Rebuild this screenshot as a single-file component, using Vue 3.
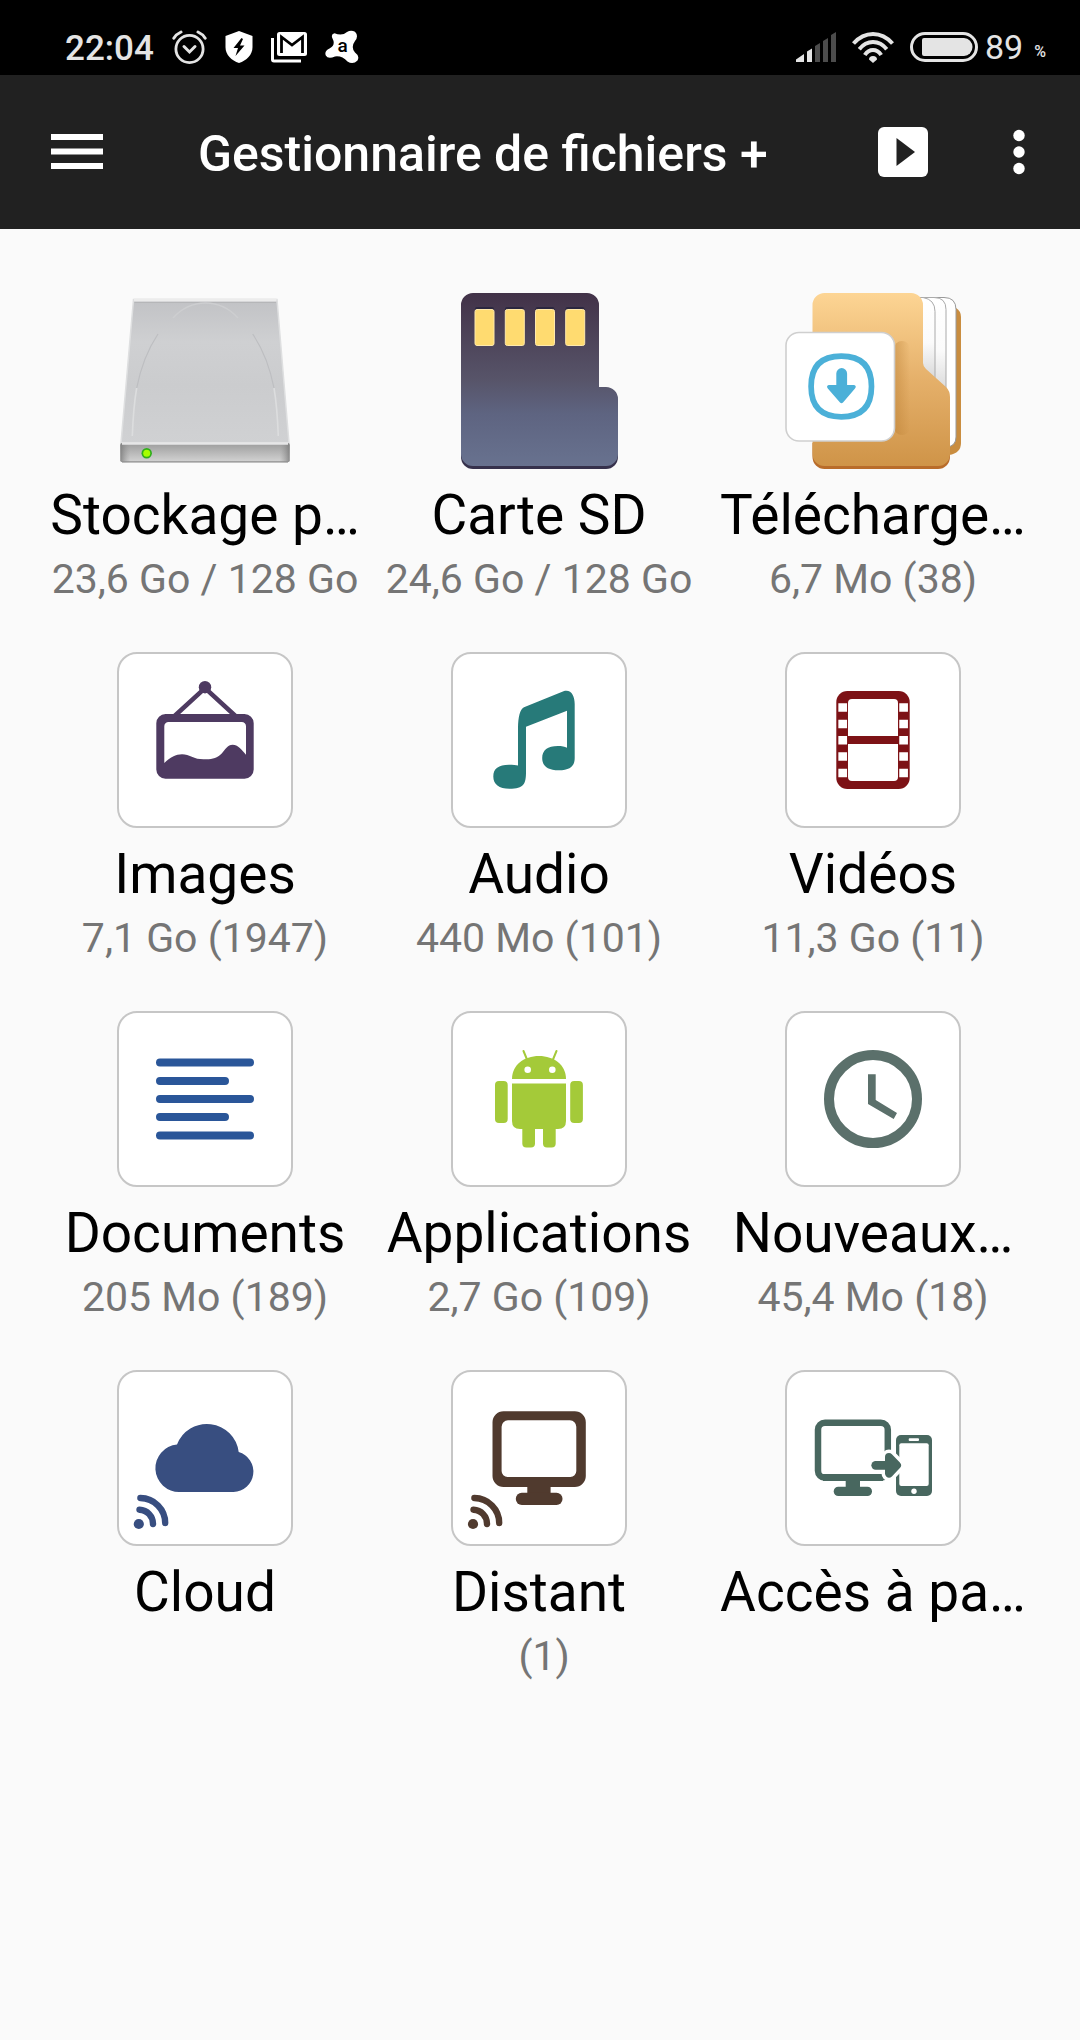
<template>
  <div class="screen">
    <div class="status-bar">
      <div class="status-left">
        <span class="clock">22:04</span>
        <svg class="status-icon" width="35" height="34" viewBox="0 0 35 34" fill="none" stroke="#e4e4e4" aria-hidden="true">
          <circle cx="17.5" cy="19" r="13.6" stroke-width="2.8" />
          <path d="M12 16.5l5.5 5.5 5.5-5.5" stroke-width="3" stroke-linecap="round" />
          <path d="M1.8 8.2Q4.5 4 9 2M33.2 8.2Q30.5 4 26 2" stroke-width="3" stroke-linecap="round" />
        </svg>
        <svg class="status-icon" width="28" height="34" viewBox="0 0 28 34" aria-hidden="true">
          <path fill="#fff" d="M14 1l13.5 5v11c0 8-6 13.5-13.5 16C6.500 30.500.5 25 .5 17V6z" />
          <path fill="#000" d="M16.5 8L8.500 18h4.500l-2.500 8L19.500 15.500H15l3-6.500z" />
        </svg>
        <svg class="status-icon" width="36" height="34" viewBox="0 0 36 34" aria-hidden="true">
          <path fill="none" stroke="#fff" stroke-width="3" d="M1.5 8v21.500q0 1.500 1.500 1.500h27" />
          <rect x="6" y="2" width="30" height="24" rx="2.5" fill="#fff" />
          <path fill="none" stroke="#000" stroke-width="2.8" d="M10.5 23V7l10.500 8 10.500-8v16" />
        </svg>
        <svg class="status-icon" width="34" height="34" viewBox="0 0 34 34" aria-hidden="true">
          <path
            fill="#fff"
            d="M7.500 8.500Q5.500 4 9.500 3.200 17 6.500 22 2 26-.5 30 1.800 34 6 30 11 25.500 17 30 22.500 35 26 32.500 30.500 28 35 22.500 31.500 17 25.500 10 26.500 3 29.500.8 25.500-1 21 4.500 18.500 11 15 7.500 8.500z"
          />
          <text x="17.500" y="22" text-anchor="middle" class="badge-letter">a</text>
        </svg>
      </div>
      <div class="status-right">
        <svg class="status-icon" width="40" height="30" viewBox="0 0 40 30" aria-hidden="true">
          <path fill="#e4e4e4" d="M0 30v-2.500L8 22v8zM11 30V19.500l5-3V30z" />
          <path fill="#4c4c4c" d="M19 30V14l5-3v19zM27 30V9l5-3v24zM35 30V3l5-3v30z" />
        </svg>
        <svg class="status-icon wifi" width="42" height="31" viewBox="0 0 42 31" fill="none" stroke="#e4e4e4" stroke-width="4" aria-hidden="true">
          <path d="M1.5 11.500Q10 2 21 2t19.500 9.500M7.300 17.200Q13 10 21 10t13.700 7.200M12.800 23Q16.200 18 21 18t8.200 5" />
          <path fill="#e4e4e4" stroke="none" d="M17 27.500q0-3.500 4-3.500t4 3.500L21 31z" />
        </svg>
        <svg class="status-icon" width="68" height="30" viewBox="0 0 68 30" aria-hidden="true">
          <rect x="1.5" y="1.5" width="65" height="27" rx="13.5" fill="none" stroke="#e4e4e4" stroke-width="3" />
          <path fill="#e4e4e4" d="M14 6h40a8.500 9 0 0 1 0 18H14q-2 0-2-2V8q0-2 2-2z" />
        </svg>
        <span class="battery-level">89</span>
        <span class="battery-unit">%</span>
      </div>
    </div>

    <header class="app-bar">
      <button class="bar-button" type="button" aria-label="Menu">
        <svg width="52" height="36" viewBox="0 0 52 36" fill="#fff">
          <path d="M0 0h52v6H0zM0 14.500h52v6H0zM0 29h52v6H0z" />
        </svg>
      </button>
      <h1 class="app-title">Gestionnaire de fichiers +</h1>
      <button class="bar-button" type="button" aria-label="Lecture">
        <svg width="50" height="50" viewBox="0 0 50 50">
          <rect width="50" height="50" rx="6" fill="#fff" />
          <path d="M18.500 11v28L37 25z" fill="#212121" />
        </svg>
      </button>
      <button class="bar-button more" type="button" aria-label="Plus d'options">
        <svg width="12" height="46" viewBox="0 0 12 46" fill="#fff">
          <circle cx="6" cy="6.5" r="5.7" />
          <circle cx="6" cy="23" r="5.7" />
          <circle cx="6" cy="39.5" r="5.7" />
        </svg>
      </button>
    </header>

    <main class="tiles">
      <button v-for="item in items" :key="item.id" type="button" class="tile">
        <svg
          class="tile-icon"
          :class="{ card: item.card }"
          :viewBox="item.card ? '2 2 172 172' : '0 0 176 176'"
          aria-hidden="true"
        >
          <g v-if="item.id === 'storage'">
            <defs>
              <linearGradient id="driveTop" x1="0" y1="0" x2="0" y2="1">
                <stop offset="0" stop-color="#c1c2c5" />
                <stop offset=".3" stop-color="#cfd0d2" />
                <stop offset=".6" stop-color="#cbccce" />
                <stop offset="1" stop-color="#d0d1d3" />
              </linearGradient>
              <linearGradient id="driveFront" x1="0" y1="0" x2="0" y2="1">
                <stop offset="0" stop-color="#9c9c9c" />
                <stop offset="1" stop-color="#d4d4d4" />
              </linearGradient>
              <linearGradient id="driveEdge">
                <stop offset="0" stop-color="#777" stop-opacity=".8" />
                <stop offset=".06" stop-color="#999" stop-opacity="0" />
                <stop offset=".94" stop-color="#999" stop-opacity="0" />
                <stop offset="1" stop-color="#777" stop-opacity=".8" />
              </linearGradient>
            </defs>
            <path fill="url(#driveTop)" stroke="#dedfe0" stroke-width="1.5" d="M16.5 6.500h143.500L172 150H4z" />
            <path fill="none" stroke="#ececec" stroke-width="3" d="M17 7h142.500" />
            <path fill="none" stroke="#b5b6b8" d="M17.5 9.500h141.500" />
            <path fill="none" stroke="#dcddde" stroke-width="1.6" d="M15.300 143C16 125 17 110 19.700 95M161.300 143C160.600 125 159.600 110 157 95" />
            <path fill="none" stroke="#cdced0" stroke-width="1.4" d="M56 25C66 14 77 10 88.500 10s22.500 4 32.500 15" />
            <path fill="none" stroke="#bdbec1" stroke-width="1.2" d="M19.700 95C24 73 31 56 41 41M157 95C152.700 73 145.700 56 135.700 41" />
            <rect x="3.3" y="150" width="169.4" height="19.3" rx="2" fill="url(#driveFront)" />
            <rect x="3.3" y="150" width="169.4" height="19.3" rx="2" fill="url(#driveEdge)" />
            <path fill="none" stroke="#e6e6e7" stroke-width="2.6" d="M5 150.500h166" />
            <path fill="none" stroke="#8f8f8f" stroke-width="1.2" d="M5 168.800h166" />
            <circle cx="29.7" cy="160.3" r="5.2" fill="#2fae1c" />
            <circle cx="29.7" cy="160.3" r="3.5" fill="#a6ff00" />
          </g>

          <g v-else-if="item.id === 'sd'">
            <defs>
              <linearGradient id="sdBody" x1="0" y1="0" x2="0" y2="1">
                <stop offset="0" stop-color="#423248" />
                <stop offset=".5" stop-color="#575469" />
                <stop offset=".7" stop-color="#5e6481" />
                <stop offset="1" stop-color="#68728f" />
              </linearGradient>
            </defs>
            <path fill="#36314c" d="M10 150h157v14a12 12 0 0 1-12 12H22a12 12 0 0 1-12-12z" />
            <path fill="url(#sdBody)" d="M22 0h114a12 12 0 0 1 12 12v82h7a12 12 0 0 1 12 12v55a12 12 0 0 1-12 12H22a12 12 0 0 1-12-12V12A12 12 0 0 1 22 0z" />
            <path fill="#2b2740" d="M24 18v-2q0-2 2-2h15q2 0 2 2v2zM54 18v-2q0-2 2-2h15q2 0 2 2v2zM84.500 18v-2q0-2 2-2h15q2 0 2 2v2zM114.500 18v-2q0-2 2-2h15q2 0 2 2v2z" />
            <g fill="#ffdb70" stroke="#ffe9ab" stroke-width="1">
              <rect x="24" y="16.5" width="19" height="36" rx="2" />
              <rect x="54.3" y="16.5" width="19" height="36" rx="2" />
              <rect x="84.5" y="16.5" width="19" height="36" rx="2" />
              <rect x="114.7" y="16.5" width="19" height="36" rx="2" />
            </g>
          </g>

          <g v-else-if="item.id === 'downloads'">
            <defs>
              <linearGradient id="folder" x1="0" y1="0" x2="0" y2="1">
                <stop offset="0" stop-color="#fdd594" />
                <stop offset=".5" stop-color="#e5b06a" />
                <stop offset="1" stop-color="#cf9448" />
              </linearGradient>
              <linearGradient id="paper" x1="0" y1="0" x2="0" y2="1">
                <stop offset="0" stop-color="#fff" />
                <stop offset=".5" stop-color="#fbfbfb" />
                <stop offset="1" stop-color="#cfcfcf" />
              </linearGradient>
              <linearGradient id="cardShade">
                <stop offset="0" stop-color="#b87c30" stop-opacity=".45" />
                <stop offset="1" stop-color="#b87c30" stop-opacity="0" />
              </linearGradient>
            </defs>
            <path fill="#c98d40" d="M130 15h41q5 3 5 9v126q0 10-12 12h-34z" />
            <path fill="#fff" stroke="#999" d="M130 4.500h29q12 0 12 12V144q0 9-9 10h-32z" />
            <path fill="url(#paper)" stroke="#aaa" d="M130 4.500h19q12 0 12 12V110h-31z" />
            <path fill="url(#paper)" stroke="#aaa" d="M130 4.500h8q12 2 12 14V95h-20z" />
            <path fill="#b96c2a" d="M27.500 150h137.500v14a12 12 0 0 1-12 12H39.500a12 12 0 0 1-12-12z" />
            <path fill="url(#folder)" d="M39.500 0h86.500a12 12 0 0 1 12 12v58q0 3 3 6l20 18q4 4 4 10v57a12 12 0 0 1-12 12H39.500a12 12 0 0 1-12-12V12A12 12 0 0 1 39.500 0z" />
            <rect x="109" y="48" width="16" height="94" rx="8" fill="url(#cardShade)" />
            <rect x="1" y="39.5" width="108.5" height="108.5" rx="13" fill="#fff" stroke="#cfcfcf" stroke-width="1.6" />
            <path fill="none" stroke="#4bb0d8" stroke-width="5.7" d="M56.300 63.200c20 0 30.200 10 30.200 30.300s-10.200 30.300-30.200 30.300-30.200-10-30.200-30.300 10.200-30.300 30.200-30.300z" />
            <path fill="#4bb0d8" d="M51.300 80.500a5.400 5.400 0 0 1 10.800 0V92H69q3 1 1 3.500L58 109.500q-1.500 1.500-3 0L42.800 95.500q-2-2.500 1-3.500h7.500z" />
          </g>

          <g v-else-if="item.id === 'images'" fill="#4e3a61">
            <circle cx="88" cy="35.2" r="6.2" />
            <path fill="none" stroke="#4e3a61" stroke-width="4.5" d="M57 64.500L88 36l31 28.500" />
            <path fill-rule="evenodd" d="M48.500 62h79a9.200 9.200 0 0 1 9.200 9.200v46.300a9.200 9.200 0 0 1-9.200 9.200h-79a9.200 9.200 0 0 1-9.200-9.200V71.200a9.200 9.200 0 0 1 9.200-9.200zM51.500 70a4.200 4.200 0 0 0-4.200 4.200V111C53 105.500 59 102.300 65 102.300c8 0 10.500 4.400 18 4.700 11 .6 16 .3 21.700-5.500 3.500-4 5.800-8.800 11-8.800 5 0 8.800 4.800 13.300 10V74.200a4.200 4.200 0 0 0-4.200-4.200z" />
          </g>

          <path
            v-else-if="item.id === 'audio'"
            fill="#277a79"
            d="M73 55.300L112.500 39.300C120 36.800 123.700 44 123.700 52v54c0 8-4.500 12.300-16 12.300-11 0-16.500-4.300-16.500-12.200S96.500 94 107 94c4 0 6.500.5 9 1.700v-37L75 74.700v45c0 12-2 17-16.500 17-10.500 0-16.200-4.300-16.200-12.200s5.200-11.800 15.700-11.800c4 0 7 .2 9 .8V76c0-11 2-18.500 6-20.700z"
          />

          <g v-else-if="item.id === 'videos'">
            <rect x="51.3" y="39" width="73.4" height="98" rx="11" fill="#7d1216" />
            <path fill="#fff" d="M67 47h42q4 0 4 4v33H63V51q0-4 4-4zM63 92h50v33q0 4-4 4H67q-4 0-4-4z" />
            <path
              stroke="#fff"
              stroke-width="8.7"
              stroke-dasharray="8.5 7.85"
              d="M57.700 51.300v74M118.600 51.300v74"
            />
          </g>

          <path
            v-else-if="item.id === 'documents'"
            stroke="#2a5699"
            stroke-width="8"
            stroke-linecap="round"
            d="M43 51.500h90M43 70h65M43 88h90M43 106h65M43 124.500h90"
          />

          <g v-else-if="item.id === 'apps'" fill="#a4ca39">
            <path d="M61 68c0-14 12-23 27-23s27 9 27 23z" />
            <path fill="none" stroke="#a4ca39" stroke-width="2" stroke-linecap="round" d="M72.500 40l3.500 8.500M105.500 40l-3.500 8.500" />
            <circle cx="76.7" cy="58.7" r="3.3" fill="#fff" />
            <circle cx="101.3" cy="58.7" r="3.3" fill="#fff" />
            <path d="M61 72.500h54V110q0 8-8 8h-2.300v14.500q0 4-4 4H96q-4 0-4-4V118h-8v14.500q0 4-4 4h-4.700q-4 0-4-4V118H69q-8 0-8-8z" />
            <rect x="44" y="70" width="12.7" height="42" rx="4" />
            <rect x="119.2" y="70" width="12.7" height="42" rx="4" />
          </g>

          <g v-else-if="item.id === 'recent'" fill="#5b706b">
            <circle cx="88" cy="88" r="44" fill="none" stroke="#5b706b" stroke-width="10" />
            <path d="M83 63.300h7.700V89L112 102l-3.300 6L83 93z" />
          </g>

          <g v-else-if="item.id === 'cloud'" fill="#384e80">
            <path d="M62.700 121.900a23.700 23.700 0 0 1-2.700-47.300A32 32 0 0 1 121.700 82.100a20.300 20.300 0 0 1-5.200 39.800z" />
            <circle cx="21.8" cy="154" r="5.1" />
            <path fill="none" stroke="#384e80" stroke-width="6.4" stroke-linecap="round" d="M22.500 139.700A14 14 0 0 1 36 154M23.400 128A25 25 0 0 1 48.200 153" />
          </g>

          <g v-else-if="item.id === 'remote'" fill="#503a2e">
            <path fill-rule="evenodd" d="M52.500 41.300h71.300a11 11 0 0 1 11 11V106a11 11 0 0 1-11 11H52.500a11 11 0 0 1-11-11V52.300a11 11 0 0 1 11-11zM57 50.300a6.400 6.400 0 0 0-6.400 6.400V101a6 6 0 0 0 6 6h62.700a6 6 0 0 0 6-6V56.700a6.400 6.400 0 0 0-6.400-6.400z" />
            <path d="M76.300 116h23.300v8H76.300z" />
            <rect x="64.8" y="122.7" width="46.7" height="12.3" rx="6" />
            <circle cx="22" cy="154" r="5.1" />
            <path fill="none" stroke="#503a2e" stroke-width="6.4" stroke-linecap="round" d="M22.500 139.700A14 14 0 0 1 36 154M23.400 128A25 25 0 0 1 48.200 153" />
          </g>

          <g v-else-if="item.id === 'pc'" fill="#48675f">
            <rect x="33" y="52.8" width="69.8" height="55" rx="7" fill="none" stroke="#48675f" stroke-width="6.5" />
            <path d="M38 104h60v7H38zM60.700 110H75v8H60.700z" />
            <rect x="48.7" y="116.7" width="38.3" height="9.3" rx="4.6" />
            <rect x="111" y="65" width="36" height="61" rx="5" />
            <rect x="114.3" y="73.3" width="29.4" height="42.7" rx="2" fill="#fff" />
            <rect x="123.7" y="68.3" width="10.3" height="2.7" rx="1" fill="#fff" />
            <circle cx="129" cy="121.3" r="2.7" fill="#fff" />
            <g stroke-linecap="round" stroke-linejoin="round">
              <path fill="#fff" stroke="#fff" stroke-width="15" d="M104 87l8 8.300-8 8.300z" />
              <path fill="none" stroke="#48675f" stroke-width="8.7" d="M90.700 95.300H106" />
              <path stroke="#48675f" stroke-width="8" d="M104 87l8 8.300-8 8.300z" />
            </g>
          </g>
        </svg>
        <span class="tile-name">{{ item.name }}</span>
        <span class="tile-info">{{ item.info }}</span>
      </button>
    </main>
  </div>
</template>

<script setup>
const items = [
  { id: 'storage', name: 'Stockage p…', info: '23,6 Go / 128 Go', card: false },
  { id: 'sd', name: 'Carte SD', info: '24,6 Go / 128 Go', card: false },
  { id: 'downloads', name: 'Télécharge…', info: '6,7 Mo (38)', card: false },
  { id: 'images', name: 'Images', info: '7,1 Go (1947)', card: true },
  { id: 'audio', name: 'Audio', info: '440 Mo (101)', card: true },
  { id: 'videos', name: 'Vidéos', info: '11,3 Go (11)', card: true },
  { id: 'documents', name: 'Documents', info: '205 Mo (189)', card: true },
  { id: 'apps', name: 'Applications', info: '2,7 Go (109)', card: true },
  { id: 'recent', name: 'Nouveaux…', info: '45,4 Mo (18)', card: true },
  { id: 'cloud', name: 'Cloud', info: '', card: true },
  // no size for remote locations, only the count after the separator
  { id: 'remote', name: 'Distant', info: '\u00a0(1)', card: true },
  { id: 'pc', name: 'Accès à pa…', info: '', card: true }
]
</script>

<style>
body {
  margin: 0;
  background: #fafafa;
}
</style>

<style scoped>
.screen {
  min-height: 100vh;
  background: #fafafa;
  font-family: Roboto, "Noto Sans", sans-serif;
}

.status-bar {
  display: flex;
  justify-content: space-between;
  align-items: center;
  box-sizing: border-box;
  height: 75px;
  padding: 19px 34px 0 65px;
  background: #000;
  color: #e4e4e4;
}

.status-left {
  display: flex;
  align-items: center;
  gap: 18px;
}

.status-right {
  display: flex;
  align-items: center;
}

.status-icon {
  display: block;
  flex: none;
}

.clock {
  padding-top: 3px;
  font-size: 35px;
  line-height: 40px;
  font-weight: 500;
}

.badge-letter {
  font-family: Roboto, sans-serif;
  font-size: 19px;
  font-weight: 500;
  fill: #000;
}

.wifi {
  margin: 0 16px;
}

.battery-level {
  margin: 0 11px 0 7px;
  font-size: 34px;
  line-height: 40px;
}

.battery-unit {
  padding-top: 10px;
  font-size: 16px;
  line-height: 20px;
  font-weight: 500;
}

.app-bar {
  display: flex;
  align-items: center;
  box-sizing: border-box;
  height: 154px;
  padding: 0 55px 0 51px;
  background: #212121;
  color: #fff;
}

.bar-button {
  display: block;
  flex: none;
  padding: 0;
  border: 0;
  background: none;
  cursor: pointer;
}

.bar-button svg {
  display: block;
}

.app-title {
  flex: 1;
  margin: 0 0 0 95px;
  padding-top: 4px;
  font-size: 50px;
  line-height: 60px;
  font-weight: 500;
  white-space: nowrap;
}

.more {
  margin-left: 85px;
}

.tiles {
  display: grid;
  grid-template-columns: repeat(3, minmax(0, 1fr));
  row-gap: 49px;
  padding: 64px 40px 64px 38px;
}

.tile {
  display: flex;
  flex-direction: column;
  align-items: center;
  padding: 0;
  border: 0;
  background: none;
  color: #000;
  font-family: inherit;
  cursor: pointer;
}

.tile-icon {
  display: block;
  box-sizing: border-box;
  width: 176px;
  height: 176px;
}

.tile-icon.card {
  border: 2px solid #c6c6c6;
  border-radius: 20px;
  background: #fff;
}

.tile-name {
  margin-top: 14px;
  font-size: 55px;
  line-height: 64px;
  white-space: nowrap;
}

.tile-info {
  min-height: 48px;
  margin-top: 8px;
  font-size: 41px;
  line-height: 48px;
  color: #757575;
  white-space: nowrap;
}
</style>
